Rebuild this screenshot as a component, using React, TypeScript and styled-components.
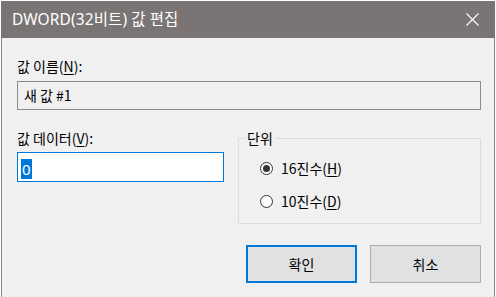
import styled, { createGlobalStyle } from 'styled-components';

const GlobalStyle = createGlobalStyle`
  html, body {
    margin: 0;
    padding: 0;
    background: #ffffff;
  }
  body {
    font-family: "Noto Sans CJK KR", "Noto Sans", sans-serif;
  }
`;

function Underlined({ text, hotkey }: { text: string; hotkey: string }) {
  return (
    <>
      {text}(<S.Hotkey>{hotkey}</S.Hotkey>)
    </>
  );
}

export default function App() {
  return (
    <>
      <GlobalStyle />
      <S.Window>
        <S.TitleBar>
          <S.Title>DWORD(32비트) 값 편집</S.Title>
          <S.CloseButton aria-label="닫기">
            <svg width="13" height="13" viewBox="0 0 13 13">
              <path d="M0.5 0.5 L12.5 12.5 M12.5 0.5 L0.5 12.5" stroke="#ffffff" strokeWidth="1.1" fill="none" />
            </svg>
          </S.CloseButton>
        </S.TitleBar>

        <S.Body>
          <S.Label>
            <Underlined text="값 이름" hotkey="N" />:
          </S.Label>
          <S.NameBox>새 값 #1</S.NameBox>

          <S.DataRow>
            <S.DataColumn>
              <S.Label>
                <Underlined text="값 데이터" hotkey="V" />:
              </S.Label>
              <S.DataInput>
                <S.Selected>0</S.Selected>
              </S.DataInput>
            </S.DataColumn>

            <S.Group>
              <S.Legend>단위</S.Legend>
              <S.RadioRow>
                <S.Radio $checked />
                <S.RadioText>
                  <Underlined text="16진수" hotkey="H" />
                </S.RadioText>
              </S.RadioRow>
              <S.RadioRow>
                <S.Radio />
                <S.RadioText>
                  <Underlined text="10진수" hotkey="D" />
                </S.RadioText>
              </S.RadioRow>
            </S.Group>
          </S.DataRow>

          <S.ButtonRow>
            <S.Button $primary>확인</S.Button>
            <S.Button>취소</S.Button>
          </S.ButtonRow>
        </S.Body>
      </S.Window>
    </>
  );
}

const S = {
  Window: styled.div`
    margin: 1px 0 0 1px;
    width: 494px;
    height: 296px;
    box-sizing: border-box;
    background: #f0f0f0;
    border-left: 1px solid #8a8a8a;
    border-right: 1px solid #8a8a8a;
    display: flex;
    flex-direction: column;
  `,

  TitleBar: styled.div`
    height: 37px;
    margin: 0 -1px;
    background: #7a7574;
    display: flex;
    align-items: center;
    justify-content: space-between;
    padding: 0 8px 0 11px;
  `,

  Title: styled.div`
    color: #ffffff;
    font-family: "Noto Sans", "Noto Sans CJK KR", sans-serif;
    font-size: 15.5px;
    letter-spacing: 0.1px;
    margin-top: -2px;
  `,

  CloseButton: styled.div`
    width: 28px;
    height: 28px;
    display: flex;
    align-items: center;
    justify-content: center;
    margin-right: 1px;
  `,

  Body: styled.div`
    padding: 19px 13px 0 15px;
    display: flex;
    flex-direction: column;
  `,

  Label: styled.div`
    font-size: 14px;
    line-height: 18px;
    color: #000000;
    height: 18px;
  `,

  Hotkey: styled.span`
    text-decoration: underline;
    text-underline-offset: 2px;
  `,

  NameBox: styled.div`
    margin-top: 6px;
    height: 29px;
    box-sizing: border-box;
    border: 1px solid #8c8c8c;
    background: #f0f0f0;
    font-size: 14px;
    line-height: 26px;
    padding-left: 6px;
    color: #000000;
  `,

  DataRow: styled.div`
    display: flex;
    justify-content: space-between;
    margin-top: 19px;
  `,

  DataColumn: styled.div`
    width: 207px;
    display: flex;
    flex-direction: column;
    gap: 5px;
  `,

  DataInput: styled.div`
    height: 30px;
    box-sizing: border-box;
    border: 1px solid #0078d7;
    background: #ffffff;
    padding: 3px 0 0 3px;
  `,

  Selected: styled.span`
    display: inline-block;
    background: #0078d7;
    color: #ffffff;
    font-family: "Noto Sans", sans-serif;
    font-size: 15px;
    line-height: 20px;
    height: 20px;
    padding: 0 1px;
  `,

  Group: styled.fieldset`
    margin: 1px 0 0 0;
    width: 243px;
    height: 94px;
    box-sizing: border-box;
    border: 1px solid #dcdcdc;
    padding: 13px 0 0 0;
    display: flex;
    flex-direction: column;
    gap: 15px;
  `,

  Legend: styled.legend`
    font-size: 14px;
    line-height: 16px;
    padding: 0 2px;
    margin-left: 6px;
    color: #000000;
  `,

  RadioRow: styled.div`
    display: flex;
    align-items: center;
    gap: 8px;
    height: 18px;
    padding-left: 21px;
  `,

  Radio: styled.span<{ $checked?: boolean }>`
    width: 13px;
    height: 13px;
    box-sizing: border-box;
    border-radius: 50%;
    border: 1px solid #333333;
    background: #ffffff;
    display: flex;
    align-items: center;
    justify-content: center;
    &::after {
      content: '';
      width: 7px;
      height: 7px;
      border-radius: 50%;
      background: ${p => (p.$checked ? '#333333' : 'transparent')};
    }
  `,

  RadioText: styled.span`
    font-size: 14px;
    line-height: 18px;
    color: #000000;
  `,

  ButtonRow: styled.div`
    display: flex;
    justify-content: flex-end;
    gap: 13px;
    margin-top: 21px;
  `,

  Button: styled.div<{ $primary?: boolean }>`
    width: 111px;
    height: 38px;
    box-sizing: border-box;
    background: #e1e1e1;
    border: ${p => (p.$primary ? '2px solid #0078d7' : '1px solid #adadad')};
    display: flex;
    align-items: center;
    justify-content: center;
    font-size: 14px;
    color: #000000;
  `,
};
